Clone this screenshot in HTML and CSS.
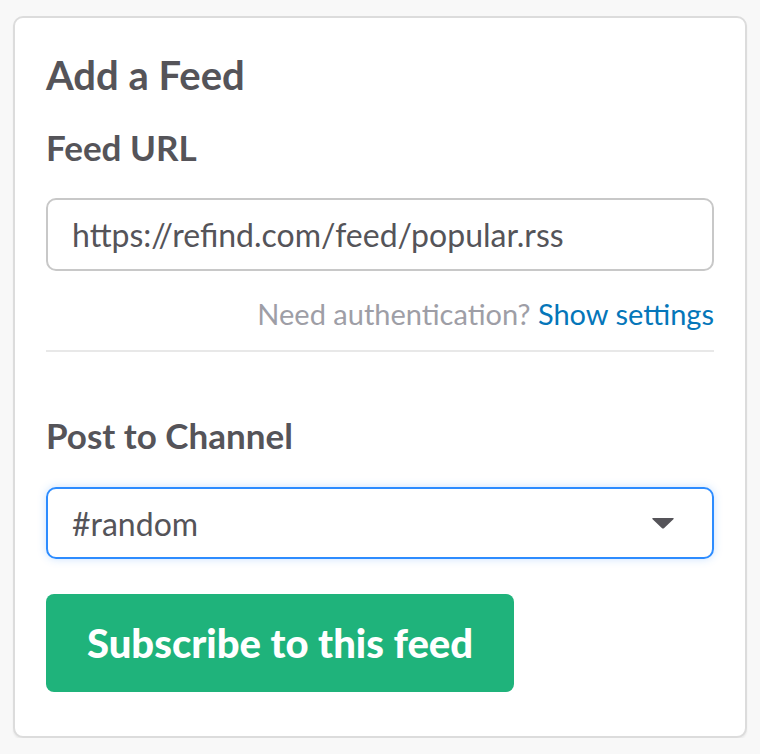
FILE: index.html
```html
<!DOCTYPE html>
<html>
<head>
<meta charset="utf-8">
<link rel="stylesheet" href="styles.css">
</head>
<body>
<div class="card">
  <h1 class="title">Add a Feed</h1>
  <label class="label label-url">Feed URL</label>
  <div class="input">https://refind.com/feed/popular.rss</div>
  <p class="help">Need authentication? <a class="link">Show settings</a></p>
  <hr class="sep">
  <label class="label label-channel">Post to Channel</label>
  <div class="select">
    <span>#random</span>
    <svg class="caret" width="24" height="12" viewBox="0 0 24 12"><path d="M2 1 H22 Q23.5 1 22.4 2.2 L13.2 11 Q12 12.2 10.8 11 L1.6 2.2 Q0.5 1 2 1 Z" fill="#555459"/></svg>
  </div>
  <div class="actions"><button class="btn">Subscribe to this feed</button></div>
</div>
</body>
</html>
```
FILE: styles.css
```css
html, body {
  margin: 0;
  padding: 0;
  background: #f8f8f8;
}
body {
  font-family: Lato, "Noto Sans", sans-serif;
  color: #555459;
  padding: 16px 13px 0 13px;
}
.card {
  background: #fff;
  border: 2px solid #dcdcdc;
  border-radius: 10px;
  box-shadow: 0 2px 2px rgba(0,0,0,0.06);
  padding: 31px 31px 44px 31px;
  height: 722px;
  box-sizing: border-box;
  display: flex;
  flex-direction: column;
}
.title {
  margin: 0;
  font-size: 40px;
  line-height: 52px;
  font-weight: 700;
}
.label {
  display: block;
  font-size: 35px;
  font-weight: 700;
  line-height: 42px;
}
.label-url { margin-top: 25px; }
.input {
  margin-top: 30px;
  height: 73px;
  box-sizing: border-box;
  border: 2px solid #c8c8c8;
  border-radius: 10px;
  padding: 0 24px;
  font-size: 32px;
  display: flex;
  align-items: center;
}
.help {
  margin: 26px 0 0 0;
  text-align: right;
  font-size: 29px;
  line-height: 34px;
  color: #9e9ea6;
}
.link { color: #0576b9; }
.sep {
  margin: 19px 0 0 0;
  border: 0;
  height: 2px;
  background: #e8e8e8;
}
.label-channel { margin-top: 62px; }
.select {
  margin-top: 31px;
  height: 72px;
  box-sizing: border-box;
  border: 2px solid #2d8cff;
  border-radius: 10px;
  box-shadow: 0 0 8px rgba(45,140,255,0.25);
  padding: 0 37px 0 24px;
  font-size: 32px;
  display: flex;
  align-items: center;
  justify-content: space-between;
}
.actions { margin-top: 35px; }
.btn {
  font-family: Lato, "Noto Sans", sans-serif;
  background: #1fb37b;
  color: #fff;
  border: 0;
  border-radius: 8px;
  height: 98px;
  padding: 0 41px;
  font-size: 40px;
  font-weight: 900;
}
```
